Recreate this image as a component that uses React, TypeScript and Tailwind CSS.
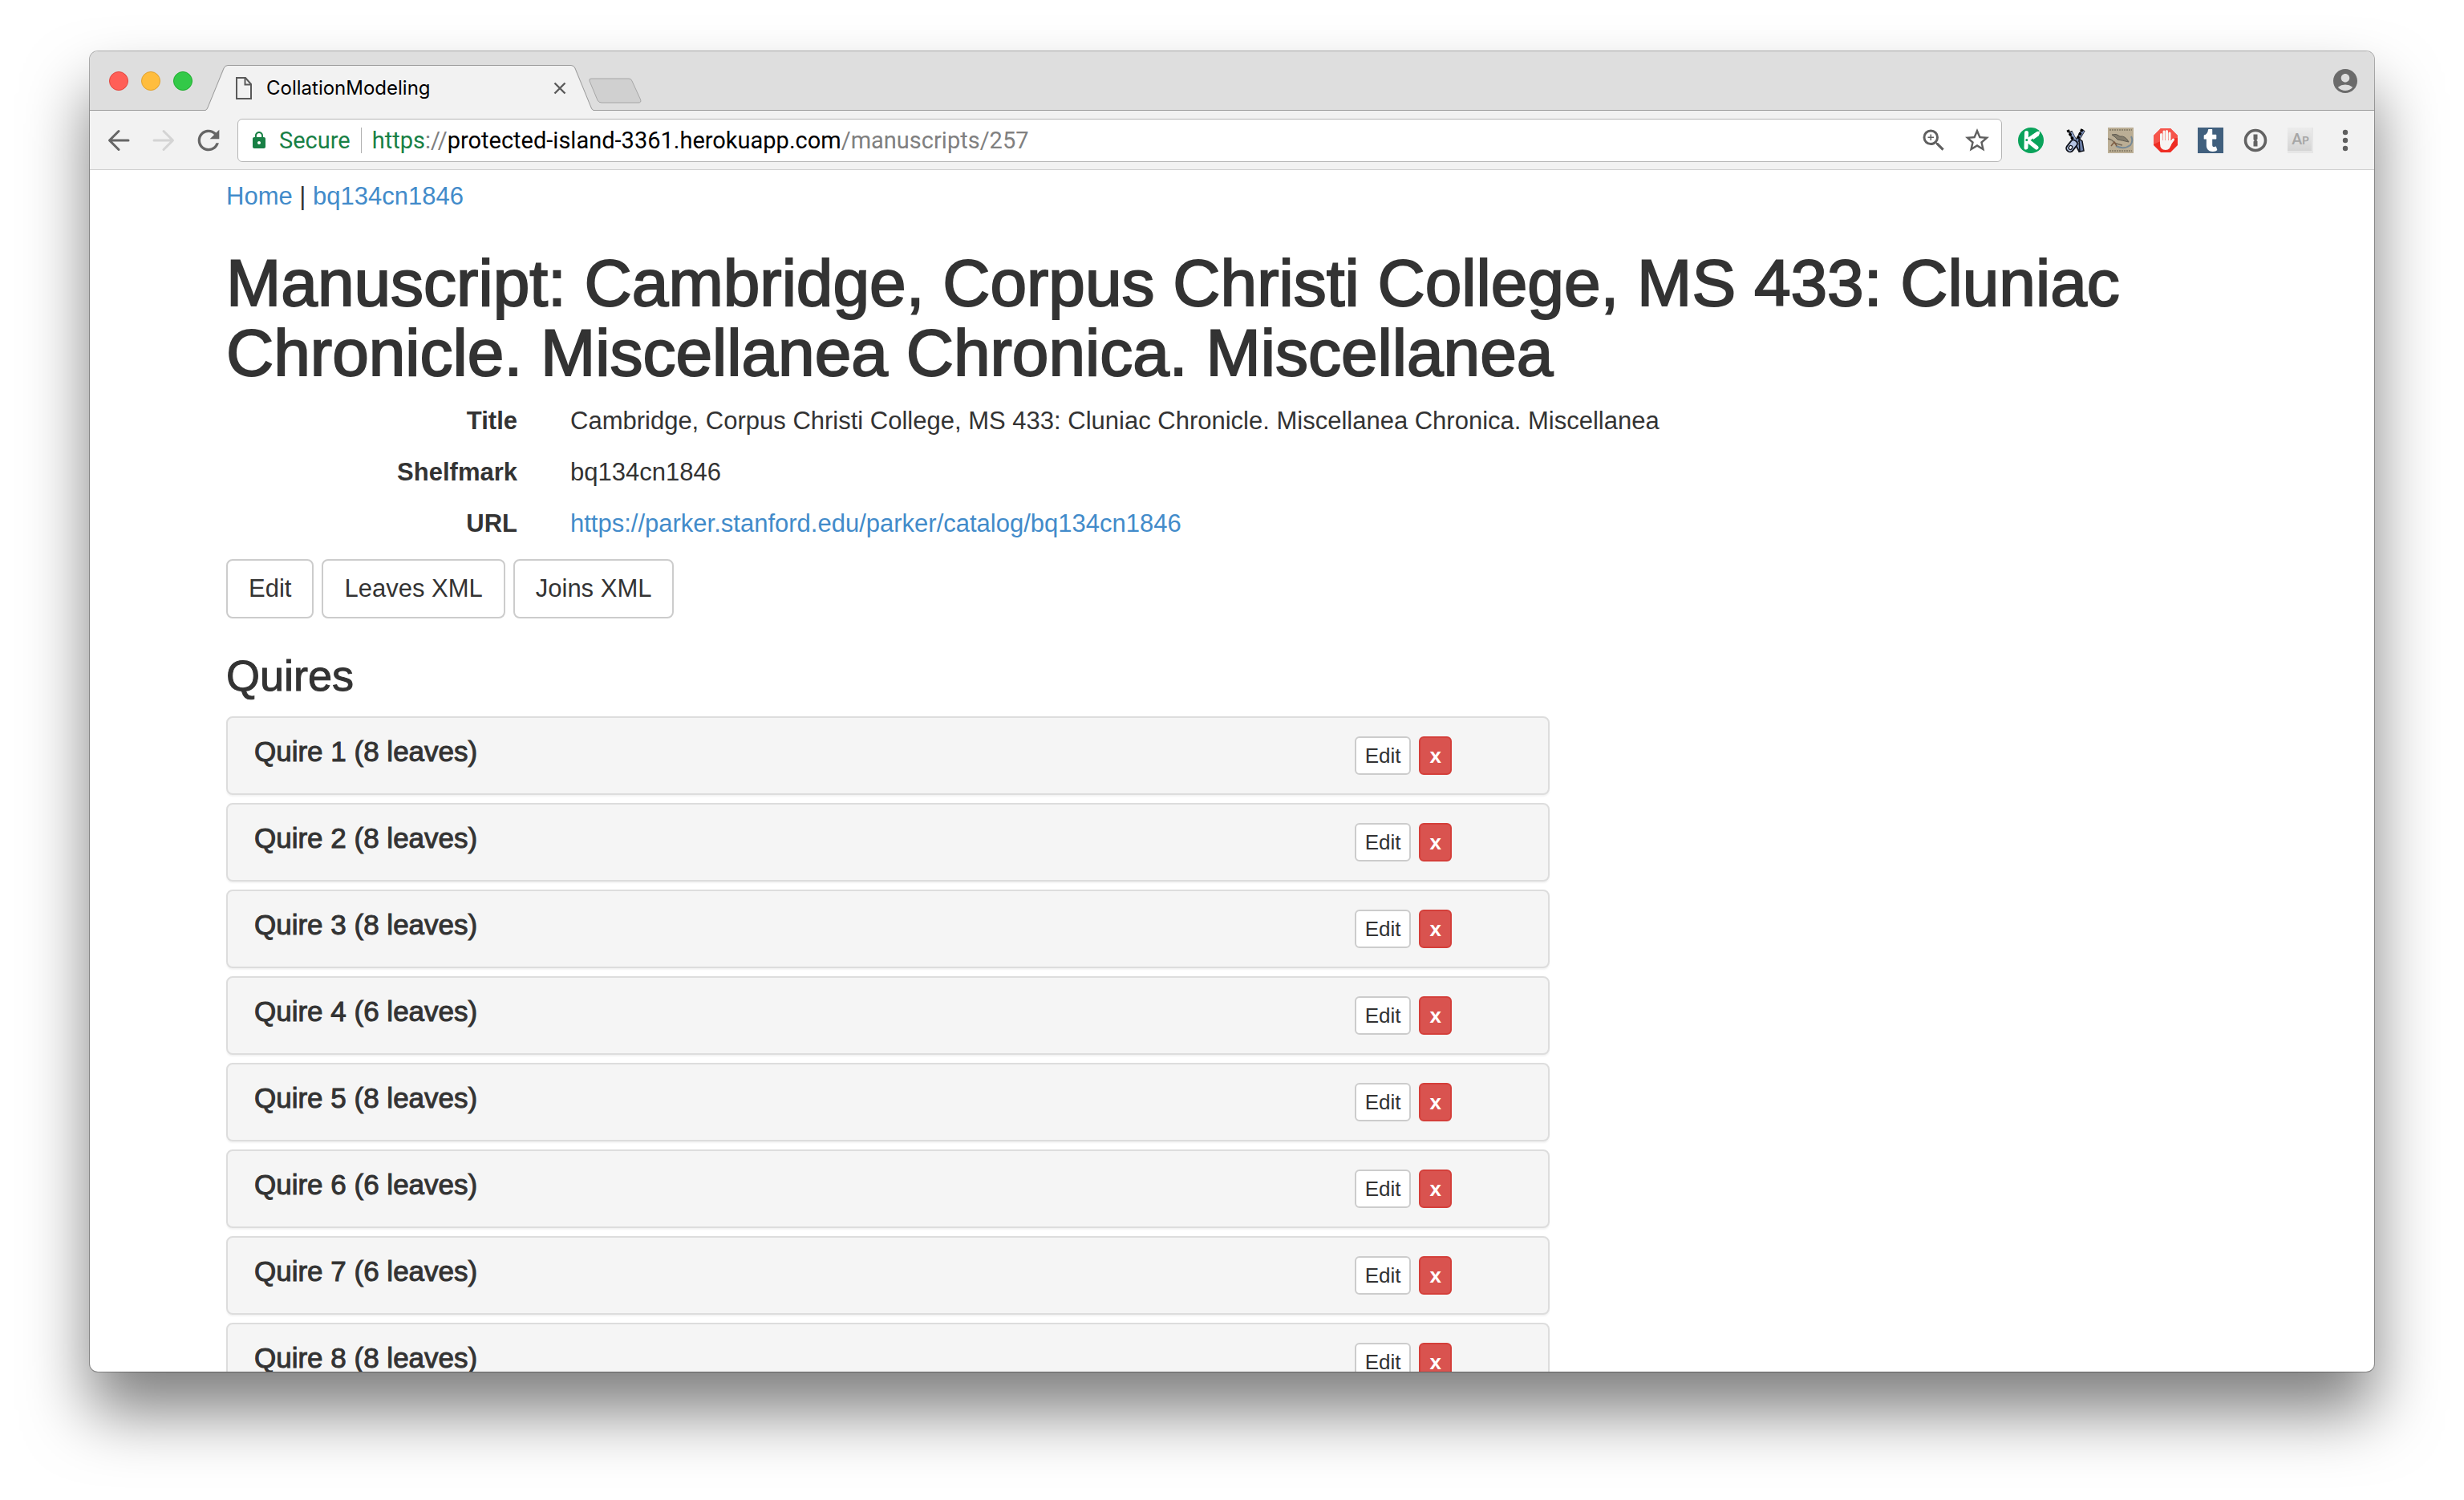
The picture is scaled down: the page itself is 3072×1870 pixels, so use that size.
import type { ReactNode } from 'react'
import { FaTumblr } from 'react-icons/fa'
import { MdAccountCircle, MdLock, MdRefresh, MdStarBorder, MdZoomIn } from 'react-icons/md'

interface Quire {
  id: number
  leaves: number
}

const quires: Quire[] = [
  { id: 1, leaves: 8 },
  { id: 2, leaves: 8 },
  { id: 3, leaves: 8 },
  { id: 4, leaves: 6 },
  { id: 5, leaves: 8 },
  { id: 6, leaves: 6 },
  { id: 7, leaves: 6 },
  { id: 8, leaves: 8 },
]

const catalogUrl = 'https://parker.stanford.edu/parker/catalog/bq134cn1846'

function IconButton({ label, children }: { label: string; children: ReactNode }) {
  return (
    <button aria-label={label} className="flex size-8 shrink-0 items-center justify-center text-[#5f5f5f]">
      {children}
    </button>
  )
}

function Arrow({ className }: { className: string }) {
  return (
    <svg viewBox="0 0 32 32" className={className} fill="none" stroke="currentColor" strokeWidth="3" strokeLinecap="round" strokeLinejoin="round">
      <path d="M28 16H5M16 4.500L4.500 16L16 27.500" />
    </svg>
  )
}

/* Toolbar extensions */

function KnifeIcon() {
  return (
    <svg viewBox="0 0 32 32" className="size-8">
      <circle cx="16" cy="16" r="16" fill="#0aa35b" />
      <g stroke="#fff" strokeLinecap="round" fill="none">
        <path d="M10.500 6.500L10 25" strokeWidth="5" />
        <path d="M12 15.500L24.500 7" strokeWidth="4.500" />
        <path d="M13 17L23 25" strokeWidth="5" />
      </g>
      <path d="M18 9l9-5-1 6-7 5z" fill="#fff" />
      <circle cx="10.800" cy="15.500" r="1.500" fill="#0aa35b" />
    </svg>
  )
}

function ZipperIcon() {
  return (
    <svg viewBox="0 0 32 32" className="size-8">
      <path d="M9 5L22 30" stroke="#15171f" strokeWidth="5" />
      <path d="M25.500 3L13 24" stroke="#15171f" strokeWidth="5" />
      <path d="M10 6L22 28" stroke="#8ea3cc" strokeWidth="2.800" />
      <path d="M25.500 4L15 21" stroke="#7488b2" strokeWidth="2.800" />
      <path d="M6 3L13 16M24 2L18 15" stroke="#000" strokeWidth="3.500" strokeDasharray="3 2" />
      <path d="M20 14l1 16 5-1-2-12z" fill="#6f82ab" stroke="#10131c" strokeWidth="1.500" />
      <rect x="-4.500" y="-8" width="9" height="16" rx="4" transform="translate(11 23) rotate(38)" fill="#b5c4e2" stroke="#10131c" strokeWidth="1.800" />
      <rect x="-2" y="0" width="4" height="5" rx="1.500" transform="translate(11 23) rotate(38)" fill="#f4f6fb" stroke="#10131c" strokeWidth="1.300" />
    </svg>
  )
}

function EngravingIcon() {
  return (
    <svg viewBox="0 0 32 32" className="size-8">
      <rect width="32" height="32" fill="#bbae95" />
      <path d="M2 3h28" stroke="#8f856f" strokeWidth="2" strokeDasharray="2 1" />
      <path d="M2 29h28" stroke="#8f856f" strokeWidth="2" strokeDasharray="2 1" />
      <path d="M5 9q6-2 10 2 7-1 11 7-8-2-14-3-2-3-7-6z" fill="#857d6c" stroke="#5e5a50" strokeWidth="1" />
      <path d="M0 14q6 1 8 5 5 2 10 3" fill="none" stroke="#766b5b" strokeWidth="1.500" />
      <path d="M10 23q10 5 18-1 4-5 1-11" fill="none" stroke="#768996" strokeWidth="2" />
      <path d="M4 23l4-5 3 5" fill="none" stroke="#7d5c42" strokeWidth="1.500" />
    </svg>
  )
}

function StopHandIcon() {
  return (
    <svg viewBox="0 0 32 32" className="size-8">
      <path d="M10 1h12l9 9v12l-9 9H10l-9-9V10z" fill="#ee2d24" />
      <path d="M10 1h12l9 9v3Q14 14 1 21V10z" fill="#f6554b" />
      <g stroke="#f7f4f2" strokeWidth="3" strokeLinecap="round">
        <path d="M10.500 8.500v10M14 5v13M17.500 4.500v13M21 7v12" />
        <path d="M21 21l4.500-6" />
      </g>
      <path d="M9 16h13.500l1.500 2q-2 10-8 10-7 0-7-8z" fill="#f7f4f2" />
    </svg>
  )
}

function TumblrIcon() {
  return (
    <span className="flex size-8 items-center justify-center bg-[#41607e] text-white">
      <FaTumblr size={28} />
    </span>
  )
}

function KeyholeIcon() {
  return (
    <svg viewBox="0 0 32 32" className="size-8">
      <circle cx="16" cy="16" r="12.500" fill="#f4f4f4" stroke="#636363" strokeWidth="3.600" />
      <path d="M13.500 8.500h5v6l-1.200 1.200 1.200 1.300v6.500h-5v-6l1.200-1.300-1.200-1.200z" fill="#636363" />
    </svg>
  )
}

function ApIcon() {
  return (
    <span className="flex size-8 items-baseline justify-center bg-linear-to-b from-[#ececec] to-[#d2d2d2] font-['Lato',sans-serif] text-[18px] leading-7 font-bold text-[#a6a6a6] shadow-[inset_-2px_-3px_0_#e6e6e6]">
      A<span className="text-[14px]">P</span>
    </span>
  )
}

function TabStrip() {
  return (
    <div className="flex h-[74px] shrink-0 border-b border-[#9b9b9b] bg-[#dedede] pr-5 pl-6">
      <div className="flex items-center gap-4">
        <button aria-label="Close window" className="size-6 rounded-full border border-[#e2463f] bg-[#ff5f57]" />
        <button aria-label="Minimize window" className="size-6 rounded-full border border-[#e1a12f] bg-[#ffbd3e]" />
        <button aria-label="Zoom window" className="size-6 rounded-full border border-[#1dad2c] bg-[#33c948]" />
      </div>
      <div className="relative -mb-px ml-4 flex h-[57px] w-[484px] items-center self-end pr-[34px] pl-[38px]">
        <svg viewBox="0 0 484 57" className="absolute inset-0 size-full">
          <path d="M0 57V56.500Q3 56 4 52L24 4Q25.500 .5 29 .5H455Q458.500 .5 460 4L480 52Q481 56 484 56.500V57z" fill="#f2f2f2" />
          <path d="M0 56.500Q2 56 3 53L23 4Q24.500 .5 28 .5H456Q459.500 .5 461 4L481 53Q482 56 484 56.500" fill="none" stroke="#9b9b9b" />
        </svg>
        <svg viewBox="0 0 20 28" className="relative h-7 w-5" fill="none" stroke="#5a5a5a" strokeWidth="2">
          <path d="M1 1h11l7 8v18H1z" />
          <path d="M11.500 1v8.500H19" />
        </svg>
        <span className="relative ml-[18px] flex-1 font-['Inter',sans-serif] text-[24px] leading-8 text-black">CollationModeling</span>
        <button aria-label="Close tab" className="relative">
          <svg viewBox="0 0 16 16" className="size-4" stroke="#5a5a5a" strokeWidth="2.400">
            <path d="M1.500 1.500l13 13M14.500 1.500l-13 13" />
          </svg>
        </button>
      </div>
      <button aria-label="New tab" className="relative -ml-[6px] mb-2 self-end">
        <svg viewBox="0 0 66 32" className="h-8 w-[66px]">
          <path d="M3 1H50Q53 1 54 4L64.500 27Q66 31 62 31H16Q12.500 31 11 28L1 4Q0 1 3 1z" fill="#d0d0d0" stroke="#a6a6a6" />
        </svg>
      </button>
      <div className="ml-auto flex items-center">
        <IconButton label="Profile">
          <MdAccountCircle className="size-9 shrink-0 text-[#6b6b6b]" />
        </IconButton>
      </div>
    </div>
  )
}

function Toolbar() {
  return (
    <div className="flex h-[74px] shrink-0 items-center border-b border-[#cfcfcf] bg-[#f2f2f2] px-5">
      <div className="flex gap-6">
        <IconButton label="Back">
          <Arrow className="size-8 text-[#666]" />
        </IconButton>
        <IconButton label="Forward">
          <Arrow className="size-8 rotate-180 text-[#d4d4d4]" />
        </IconButton>
        <IconButton label="Reload">
          <MdRefresh className="size-10 shrink-0 text-[#666]" />
        </IconButton>
      </div>
      <div className="mx-5 flex h-[54px] flex-1 items-center gap-[13px] rounded-md border border-[#b5b5b5] bg-white px-[14px] font-['Roboto',sans-serif] text-[29px] leading-9 text-[#808080]">
        <MdLock className="size-6 text-[#188045]" />
        <span className="text-[#188045]">Secure</span>
        <span className="h-8 w-px bg-[#b0b0b0]" />
        <span className="flex-1">
          <span className="text-[#188045]">https</span>://
          <span className="text-black">protected-island-3361.herokuapp.com</span>/manuscripts/257
        </span>
        <div className="flex gap-[22px]">
          <IconButton label="Zoom">
            <MdZoomIn className="size-9 shrink-0" />
          </IconButton>
          <IconButton label="Bookmark this page">
            <MdStarBorder className="size-9 shrink-0" />
          </IconButton>
        </div>
      </div>
      <div className="flex gap-6">
        <IconButton label="Knife extension"><KnifeIcon /></IconButton>
        <IconButton label="Zipper extension"><ZipperIcon /></IconButton>
        <IconButton label="Engraving extension"><EngravingIcon /></IconButton>
        <IconButton label="Ad blocker"><StopHandIcon /></IconButton>
        <IconButton label="Tumblr"><TumblrIcon /></IconButton>
        <IconButton label="Password manager"><KeyholeIcon /></IconButton>
        <IconButton label="AP extension"><ApIcon /></IconButton>
        <IconButton label="Menu">
          <svg viewBox="0 0 32 32" className="size-8" fill="currentColor">
            <circle cx="16" cy="6" r="3.200" />
            <circle cx="16" cy="16" r="3.200" />
            <circle cx="16" cy="26" r="3.200" />
          </svg>
        </IconButton>
      </div>
    </div>
  )
}

function Button({ children }: { children: ReactNode }) {
  return <button className="h-[74px] rounded-lg border-2 border-[#ccc] bg-white px-[26px]">{children}</button>
}

function Detail({ term, children }: { term: string; children: ReactNode }) {
  return (
    <div className="grid grid-cols-12">
      <dt className="col-span-2 px-[33px] text-right font-bold">{term}</dt>
      <dd className="col-span-10 px-[33px]">{children}</dd>
    </div>
  )
}

function QuirePanel({ quire }: { quire: Quire }) {
  return (
    <li className="grid h-[98px] grid-cols-12 rounded-lg border-2 border-[#ddd] bg-[#f5f5f5] pt-[23px] shadow-[0_2px_2px_rgba(0,0,0,0.05)]">
      <h3 className="col-span-10 px-[33px] text-[35px] leading-[38px] [-webkit-text-stroke:1px]">
        Quire {quire.id} ({quire.leaves} leaves)
      </h3>
      <div className="col-span-2 flex items-start gap-[10px] px-[33px] text-[26px] leading-9">
        <button className="h-12 rounded-md border-2 border-[#ccc] bg-white px-[11px]">Edit</button>
        <button className="h-12 rounded-md border-2 border-[#d43f3a] bg-[#d9534f] px-[11px] font-bold text-white">x</button>
      </div>
    </li>
  )
}

export default function App() {
  return (
    <div className="h-screen overflow-hidden bg-white px-28 pt-16 pb-40">
      <div className="flex h-full flex-col overflow-hidden rounded-[10px] bg-white shadow-[0_0_0_1px_rgba(0,0,0,0.3),0_50px_80px_rgba(0,0,0,0.5)]">
        <TabStrip />
        <Toolbar />
        <main className="mx-auto min-h-0 w-full max-w-[2574px] flex-1 overflow-hidden px-[33px] pt-[11px] font-['Liberation_Sans',sans-serif] text-[31px] leading-11 text-[#333]">
          <nav>
            <a href="#" className="text-[#428bca]">Home</a> | <a href="#" className="text-[#428bca]">bq134cn1846</a>
          </nav>
          <h1 className="mt-[42px] mb-5 text-[82px] leading-[87px] [-webkit-text-stroke:2px]">
            Manuscript: Cambridge, Corpus Christi College, MS 433: Cluniac Chronicle. Miscellanea Chronica. Miscellanea
          </h1>
          <dl className="-mx-[33px] mb-[22px] flex flex-col gap-5">
            <Detail term="Title">Cambridge, Corpus Christi College, MS 433: Cluniac Chronicle. Miscellanea Chronica. Miscellanea</Detail>
            <Detail term="Shelfmark">bq134cn1846</Detail>
            <Detail term="URL">
              <a href={catalogUrl} className="text-[#428bca]">{catalogUrl}</a>
            </Detail>
          </dl>
          <div className="flex gap-[10px]">
            <Button>Edit</Button>
            <Button>Leaves XML</Button>
            <Button>Joins XML</Button>
          </div>

          <h2 className="mt-[42px] mb-[22px] text-[54px] leading-[58px] [-webkit-text-stroke:1px]">Quires</h2>
          <div className="-mx-[33px] grid grid-cols-12">
            <ul className="col-span-8 flex flex-col gap-[10px] px-[33px]">
              {quires.map((quire) => (
                <QuirePanel key={quire.id} quire={quire} />
              ))}
            </ul>
          </div>
        </main>
      </div>
    </div>
  )
}
